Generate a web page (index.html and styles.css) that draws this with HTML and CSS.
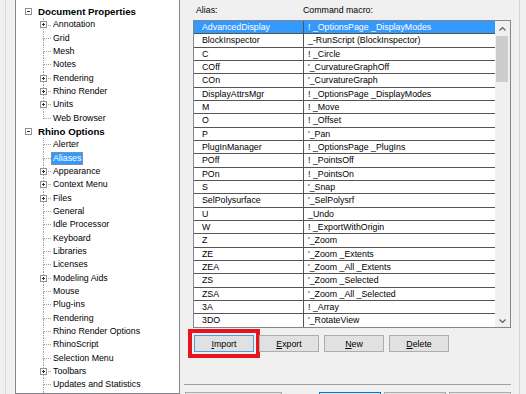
FILE: index.html
```html
<!DOCTYPE html>
<html>
<head>
    <title>Rhino Options - Aliases</title>
    <link rel="stylesheet" href="styles.css">
</head>
<body>
    <div class="gutter"></div>

    <ul class="tree">
        <li class="root">
            <div class="node"><span class="box minus"></span><span class="label">Document Properties</span></div>
            <ul>
                <li class="node"><span class="guide"></span><span class="box plus"></span><span class="label">Annotation</span></li>
                <li class="node"><span class="guide"></span><span class="label">Grid</span></li>
                <li class="node"><span class="guide"></span><span class="label">Mesh</span></li>
                <li class="node"><span class="guide"></span><span class="label">Notes</span></li>
                <li class="node"><span class="guide"></span><span class="box plus"></span><span class="label">Rendering</span></li>
                <li class="node"><span class="guide"></span><span class="box plus"></span><span class="label">Rhino Render</span></li>
                <li class="node"><span class="guide"></span><span class="box plus"></span><span class="label">Units</span></li>
                <li class="node last"><span class="guide"></span><span class="label">Web Browser</span></li>
            </ul>
        </li>
        <li class="root">
            <div class="node"><span class="box minus"></span><span class="label">Rhino Options</span></div>
            <ul>
                <li class="node"><span class="guide"></span><span class="label">Alerter</span></li>
                <li class="node"><span class="guide"></span><span class="label sel">Aliases</span></li>
                <li class="node"><span class="guide"></span><span class="box plus"></span><span class="label">Appearance</span></li>
                <li class="node"><span class="guide"></span><span class="box plus"></span><span class="label">Context Menu</span></li>
                <li class="node"><span class="guide"></span><span class="box plus"></span><span class="label">Files</span></li>
                <li class="node"><span class="guide"></span><span class="label">General</span></li>
                <li class="node"><span class="guide"></span><span class="label">Idle Processor</span></li>
                <li class="node"><span class="guide"></span><span class="label">Keyboard</span></li>
                <li class="node"><span class="guide"></span><span class="label">Libraries</span></li>
                <li class="node"><span class="guide"></span><span class="label">Licenses</span></li>
                <li class="node"><span class="guide"></span><span class="box plus"></span><span class="label">Modeling Aids</span></li>
                <li class="node"><span class="guide"></span><span class="label">Mouse</span></li>
                <li class="node"><span class="guide"></span><span class="label">Plug-ins</span></li>
                <li class="node"><span class="guide"></span><span class="label">Rendering</span></li>
                <li class="node"><span class="guide"></span><span class="label">Rhino Render Options</span></li>
                <li class="node"><span class="guide"></span><span class="label">RhinoScript</span></li>
                <li class="node"><span class="guide"></span><span class="label">Selection Menu</span></li>
                <li class="node"><span class="guide"></span><span class="box plus"></span><span class="label">Toolbars</span></li>
                <li class="node"><span class="guide"></span><span class="label">Updates and Statistics</span></li>
                <li class="node last"><span class="guide"></span></li>
            </ul>
        </li>
    </ul>

    <div class="main">
        <div class="heads">
            <span class="alias-col">Alias:</span>
            <span>Command macro:</span>
        </div>

        <div class="list">
            <div class="rows">
                <div class="row sel"><span>AdvancedDisplay</span><span>! _OptionsPage _DisplayModes</span></div>
                <div class="row"><span>BlockInspector</span><span>_-RunScript (BlockInspector)</span></div>
                <div class="row"><span>C</span><span>! _Circle</span></div>
                <div class="row"><span>COff</span><span>'_CurvatureGraphOff</span></div>
                <div class="row"><span>COn</span><span>'_CurvatureGraph</span></div>
                <div class="row"><span>DisplayAttrsMgr</span><span>! _OptionsPage _DisplayModes</span></div>
                <div class="row"><span>M</span><span>! _Move</span></div>
                <div class="row"><span>O</span><span>! _Offset</span></div>
                <div class="row"><span>P</span><span>'_Pan</span></div>
                <div class="row"><span>PlugInManager</span><span>! _OptionsPage _PlugIns</span></div>
                <div class="row"><span>POff</span><span>! _PointsOff</span></div>
                <div class="row"><span>POn</span><span>! _PointsOn</span></div>
                <div class="row"><span>S</span><span>'_Snap</span></div>
                <div class="row"><span>SelPolysurface</span><span>'_SelPolysrf</span></div>
                <div class="row"><span>U</span><span>_Undo</span></div>
                <div class="row"><span>W</span><span>! _ExportWithOrigin</span></div>
                <div class="row"><span>Z</span><span>'_Zoom</span></div>
                <div class="row"><span>ZE</span><span>'_Zoom _Extents</span></div>
                <div class="row"><span>ZEA</span><span>'_Zoom _All _Extents</span></div>
                <div class="row"><span>ZS</span><span>'_Zoom _Selected</span></div>
                <div class="row"><span>ZSA</span><span>'_Zoom _All _Selected</span></div>
                <div class="row"><span>3A</span><span>! _Array</span></div>
                <div class="row"><span>3DO</span><span>'_RotateView</span></div>
            </div>
            <div class="scroll">
                <div class="arrow">
                    <svg width="7" height="4"><polyline points="0.5,3.5 3.5,0.5 6.5,3.5" fill="none" stroke="#606060" stroke-width="1.2"/></svg>
                </div>
                <div class="thumb"></div>
                <div class="track"></div>
                <div class="arrow down">
                    <svg width="7" height="4"><polyline points="0.5,0.5 3.5,3.5 6.5,0.5" fill="none" stroke="#606060" stroke-width="1.2"/></svg>
                </div>
            </div>
        </div>

        <div class="buttons">
            <button class="focus"><u>I</u>mport</button>
            <button><u>E</u>xport</button>
            <button><u>N</u>ew</button>
            <button><u>D</u>elete</button>
        </div>

        <div class="sep"></div>

        <!-- dialog buttons, only their top edges are in view -->
        <div class="footer">
            <button class="wide"></button>
            <button class="default"></button>
            <button></button>
            <button></button>
        </div>
    </div>
</body>
</html>
```

FILE: styles.css
```css
body {
  margin: 0;
  height: 394px;
  overflow: hidden;
  display: flex;
  background: #f0f0f0;
  font-family: "Liberation Sans", Arial, sans-serif;
  font-size: 8.8px;
  color: #000;
}

.gutter {
  width: 10px;
  margin-left: 5px;
  border-left: 1px solid #d9d9d9;
  box-sizing: border-box;
  flex: none;
}

/* tree */
.tree {
  width: 165px;
  flex: none;
  box-sizing: border-box;
  margin: 0;
  padding: 5px 0 0;
  list-style: none;
  background: #fff;
  border: 1px solid #828790;
  border-top: none;
}
.tree ul {
  list-style: none;
  margin: 0 0 0 27px;
  padding: 0;
}
.node {
  display: flex;
  align-items: center;
  height: 13.333px;
}
.root > .node {
  padding-left: 9px;
}
.root > .node .label {
  margin-left: 4px;
  font-weight: bold;
  font-size: 9.7px;
}
.box {
  flex: none;
  width: 7px;
  height: 7px;
  box-sizing: border-box;
  border: 1px solid #919191;
  position: relative;
  background: linear-gradient(#333, #333) center / 3px 1px no-repeat, #fff;
}
.box.plus {
  background: linear-gradient(#333, #333) center / 3px 1px no-repeat,
              linear-gradient(#333, #333) center / 1px 3px no-repeat, #fff;
}
.tree ul .box {
  margin-left: -11px;
}
.tree ul .box + .label {
  margin-left: 4px;
}
.guide {
  flex: none;
  width: 8px;
  align-self: stretch;
  display: flex;
  flex-direction: column;
}
.guide::before,
.guide::after {
  content: "";
  flex: 1;
  border-left: 1px dotted #a0a0a0;
}
.guide::before {
  border-bottom: 1px dotted #a0a0a0;
}
.last .guide::after {
  border-left-color: transparent;
}
.label {
  border: 1px solid transparent;
  padding: 0 1px;
  line-height: 11px;
  white-space: nowrap;
}
.label.sel {
  background: #3399ff;
  color: #fff;
  border: 1px dotted #c38b3b;
}

/* right side */
.main {
  width: 340px;
  flex: none;
  box-sizing: border-box;
  padding-left: 13px;
  border-right: 1px solid #d4d4d4;
}
.heads {
  display: flex;
  align-items: center;
  height: 20px;
}
.alias-col {
  width: 110px;
  padding-left: 3px;
  box-sizing: border-box;
}

.list {
  width: 318px;
  height: 308px;
  box-sizing: border-box;
  border: 1px solid #828790;
  background: #fff;
  display: flex;
}
.rows {
  flex: 1;
  overflow: hidden;
}
.row {
  display: flex;
  height: 13.333px;
  box-sizing: border-box;
  border-bottom: 1px solid #555;
  line-height: 12.3px;
  white-space: nowrap;
}
.row span:first-child {
  width: 110px;
  flex: none;
  box-sizing: border-box;
  padding-left: 8px;
  border-right: 1px solid #555;
}
.row span + span {
  padding-left: 4px;
}
.row.sel {
  background: #3399ff;
  color: #fff;
}

.scroll {
  width: 15px;
  flex: none;
  background: #f0f0f0;
  display: flex;
  flex-direction: column;
}
.arrow {
  height: 15px;
  display: flex;
  align-items: center;
  justify-content: center;
}
.arrow.down {
  height: 13px;
}
.thumb {
  height: 46px;
  margin: 0 2px 0 1px;
  background: #cdcdcd;
}
.track {
  flex: 1;
}

button {
  font: inherit;
  color: #000;
  background: #e1e1e1;
  border: 1px solid #adadad;
  padding: 0;
  width: 60px;
  height: 17px;
}
.buttons {
  display: flex;
  gap: 5px;
  margin-top: 7px;
  padding-left: 1px;
}
.focus {
  border-color: #4a9de0;
  outline: 4px solid #e8141c;
  outline-offset: 2px;
}

.sep {
  width: 327px;
  margin: 32px 0 0 -9px;
  border-top: 1px solid #a0a0a0;
}

.footer {
  display: flex;
  gap: 3px;
  margin: 7px 0 0 -8px;
}
.footer button {
  width: 62px;
  height: 22px;
}
.footer .wide {
  width: 97px;
  margin-right: 34px;
}
.footer .default {
  border-color: #0078d7;
}
```
